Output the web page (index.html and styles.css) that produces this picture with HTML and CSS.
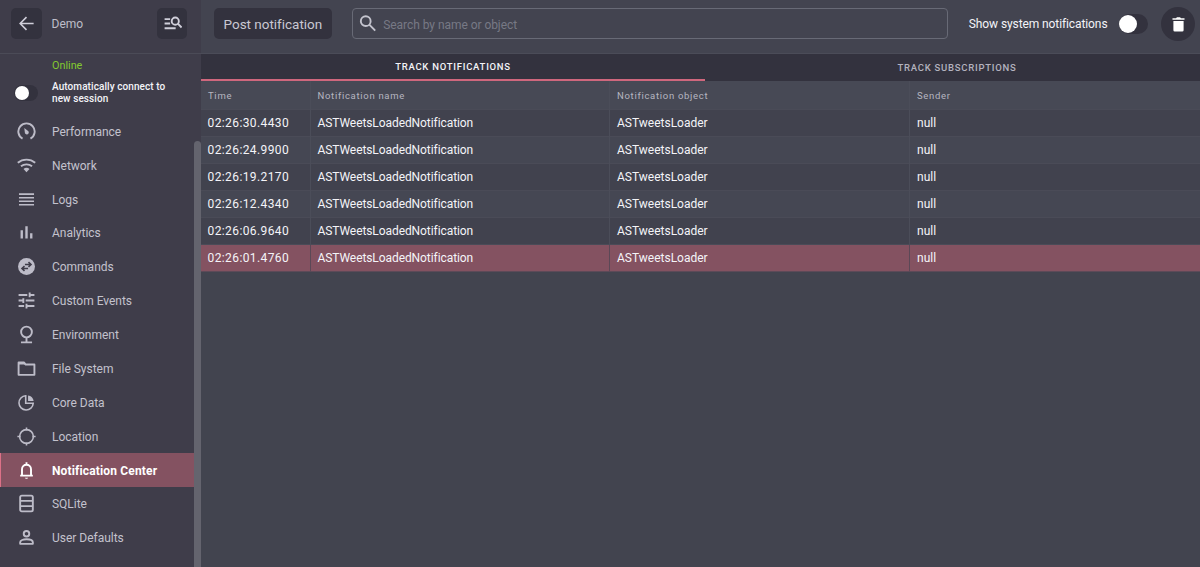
FILE: index.html
```html
<!DOCTYPE html>
<html lang="en">
<head>
<meta charset="utf-8">
<title>Notification Center</title>
<link rel="stylesheet" href="styles.css">
</head>
<body>
<div class="app">
  <aside class="sidebar">
    <header class="side-head">
      <button class="icon-button" aria-label="Back"><svg viewBox="0 0 24 24" class="ico line"><path d="M21 12H4M12 4l-8 8 8 8"/></svg></button>
      <span class="app-name">Demo</span>
      <button class="icon-button" aria-label="Find"><svg viewBox="0 0 24 24" class="ico find"><path d="M2 6.500h7M2 12h7M2 18h14"/><circle cx="15.500" cy="9" r="4.500"/><path d="M18.700 12.200L23.500 17"/></svg></button>
    </header>
    <div class="side-body">
      <div class="side-scroll">
        <div class="online">Online</div>
        <div class="auto"><span class="switch small"><i></i></span><span class="auto-text">Automatically connect to<br>new session</span></div>
        <nav class="nav">
          <a class="item"><svg viewBox="0 0 24 24" class="ico thick"><path d="M7 21a10.300 10.300 0 1 1 10 0"/><path class="fill" d="M9.200 7.500l5.200 4.300c1.200 1.600.2 3.700-1.600 3.900-1.700.2-2.900-1-2.900-2.400z"/></svg><span>Performance</span></a>
          <a class="item"><svg viewBox="0 0 24 24" class="ico thick"><path d="M1 8.500c6.300-5.300 15.700-5.300 22 0M5 13c4-3.300 10-3.300 14 0"/><path class="fill" d="M8.200 16.300c2.200-1.800 5.400-1.800 7.600 0L12 20.500z"/></svg><span>Network</span></a>
          <a class="item"><svg viewBox="0 0 24 24" class="ico line"><path d="M2.500 5.200h19M2.500 9.700h19M2.500 14.200h19M2.500 18.700h19"/></svg><span>Logs</span></a>
          <a class="item"><svg viewBox="0 0 24 24" class="ico bars"><path d="M6 9v10.500M12 4v15.500M18 13v6.500"/></svg><span>Analytics</span></a>
          <a class="item"><svg viewBox="0 0 24 24" class="ico"><circle class="fill" cx="12" cy="12" r="10.700"/><path class="cut" d="M10 9.500h7M14.500 6.500l3.200 3-3.200 3M14 14.500H7M9.500 11.500l-3.200 3 3.200 3"/></svg><span>Commands</span></a>
          <a class="item"><svg viewBox="0 0 24 24" class="ico thick"><path d="M2 5h11M16 5h6M16 2v6M2 12h6M8 9v6M11 12h11M2 19h7M12 19h10M12 16v6"/></svg><span>Custom Events</span></a>
          <a class="item"><svg viewBox="0 0 24 24" class="ico thick"><circle cx="12" cy="8.800" r="6.800"/><path d="M12 15.600V22M5 22h14"/></svg><span>Environment</span></a>
          <a class="item"><svg viewBox="0 0 24 24" class="ico thick"><path stroke-linejoin="round" d="M2 4.500h7l2 2.500h11v13H2z"/><path class="fill" d="M2 4.500h7l2 2.500H2z"/></svg><span>File System</span></a>
          <a class="item"><svg viewBox="0 0 24 24" class="ico line"><path d="M11 3.500a9 9 0 1 0 9.500 9.500H11z"/><path class="fill" d="M14 3v7h7c-.4-3.900-3.100-6.600-7-7z"/></svg><span>Core Data</span></a>
          <a class="item"><svg viewBox="0 0 24 24" class="ico line"><circle cx="12" cy="12" r="8.700"/><path d="M12 .5v4M12 19.500v4M.5 12h4M19.500 12h4"/></svg><span>Location</span></a>
          <a class="item active"><svg viewBox="0 0 24 24" class="ico thick"><path d="M4 18.500h16M6.300 18v-7.500c0-7.700 11.400-7.700 11.400 0V18M12 1.500v3"/><path class="fill" d="M10 21h4c-.4 1.900-3.600 1.900-4 0z"/></svg><span>Notification Center</span></a>
          <a class="item"><svg viewBox="0 0 24 24" class="ico thick"><rect x="4" y="2" width="16" height="20" rx="2"/><path d="M4 8.700h16M4 15.300h16"/></svg><span>SQLite</span></a>
          <a class="item"><svg viewBox="0 0 24 24" class="ico thick"><circle cx="12" cy="7.200" r="3.500"/><path stroke-linejoin="round" d="M4 20v-2c0-5 16-5 16 0v2z"/></svg><span>User Defaults</span></a>
        </nav>
      </div>
      <div class="track"><div class="thumb"></div></div>
    </div>
  </aside>
  <main class="main">
    <header class="toolbar">
      <button class="post">Post notification</button>
      <div class="search"><svg viewBox="0 0 24 24" class="ico mag"><circle cx="8.500" cy="9" r="6.200"/><path d="M13 13.500l7.500 7.500"/></svg><span>Search by name or object</span></div>
      <span class="show">Show system notifications</span>
      <span class="switch"><i></i></span>
      <button class="trash" aria-label="Clear"><svg viewBox="0 0 24 24" class="ico"><path class="fill" d="M3.500 3h5l1.300-1.200h4.400L15.500 3h5v2.300h-17zM4.800 7h14.400v13a2 2 0 0 1-2 2H6.800a2 2 0 0 1-2-2z"/></svg></button>
    </header>
    <div class="tabs"><div class="tab current"><span>TRACK NOTIFICATIONS</span></div><div class="tab"><span>TRACK SUBSCRIPTIONS</span></div></div>
    <div class="table">
      <div class="row head"><div>Time</div><div>Notification name</div><div>Notification object</div><div>Sender</div></div>
      <div class="row"><div class="time">02:26:30.4430</div><div class="name">ASTWeetsLoadedNotification</div><div>ASTweetsLoader</div><div>null</div></div>
      <div class="row"><div class="time">02:26:24.9900</div><div class="name">ASTWeetsLoadedNotification</div><div>ASTweetsLoader</div><div>null</div></div>
      <div class="row"><div class="time">02:26:19.2170</div><div class="name">ASTWeetsLoadedNotification</div><div>ASTweetsLoader</div><div>null</div></div>
      <div class="row"><div class="time">02:26:12.4340</div><div class="name">ASTWeetsLoadedNotification</div><div>ASTweetsLoader</div><div>null</div></div>
      <div class="row"><div class="time">02:26:06.9640</div><div class="name">ASTWeetsLoadedNotification</div><div>ASTweetsLoader</div><div>null</div></div>
      <div class="row selected"><div class="time">02:26:01.4760</div><div class="name">ASTWeetsLoadedNotification</div><div>ASTweetsLoader</div><div>null</div></div>
    </div>
  </main>
</div>
</body>
</html>
```

FILE: styles.css
```css
* { box-sizing: border-box; }
body { margin: 0; background: #42444f; font: 12px/14px Roboto, "IBM Plex Sans", sans-serif; color: #f4f4f8; }
button { border: 0; padding: 0; background: #33323e; color: #c9c8d2; font: inherit; }
.app { display: flex; width: 1200px; height: 567px; overflow: hidden; }

.ico { width: 19px; height: 19px; flex: none; fill: none; color: #bdbcc8; stroke: currentColor; stroke-width: 0; display: block; }
.line { stroke-width: 2; }
.thick { stroke-width: 2.4; }
.bars { stroke-width: 3; }
.find { stroke-width: 2.4; }
.mag { stroke-width: 2.4; color: #c4c4ce; }
.fill { fill: currentColor; stroke: none; }
.cut { stroke: #3f3d4a; stroke-width: 2; }

.sidebar { width: 201px; flex: none; display: flex; flex-direction: column; background: #3f3d4a; }
.side-head { height: 54px; padding: 0 14px 6px 11px; display: flex; align-items: center; border-bottom: 1px solid #4b4b57; }
.icon-button { width: 30.500px; height: 31px; border-radius: 5px; display: flex; align-items: center; justify-content: center; }
.icon-button .ico { color: #d0cfda; }
.app-name { flex: 1; margin-left: 10px; font-size: 12px; color: #bebdc8; }
.icon-button .find { margin-left: 2px; }
.side-body { flex: 1; display: flex; min-height: 0; }
.side-scroll { width: 194px; }
.online { margin: 4.500px 0 0 52px; color: #82c92f; font-size: 10.800px; height: 14px; }
.auto { display: flex; height: 41.900px; padding: 8px 0 0 14px; }
.auto-text { margin-left: 14px; font-size: 10px; font-weight: 500; line-height: 12px; letter-spacing: .08px; white-space: nowrap; }
.switch { width: 29px; height: 20px; border-radius: 10px; background: #33323e; flex: none; }
.switch i { display: block; width: 18px; height: 18px; margin: 1px 0; border-radius: 50%; background: #fff; }
.switch.small { width: 24px; height: 16px; margin-top: 4px; }
.switch.small i { width: 14px; height: 14px; margin: 1px; }
.item { display: flex; align-items: center; height: 33.880px; padding-left: 17px; color: #c3c2cd; font-size: 12px; letter-spacing: -.02px; }
.item span { margin: 1px 0 0 16px; }
.item.active { background: #845261; border-left: 1px solid #dc7187; padding-left: 16px; color: #fff; font-weight: 700; letter-spacing: .15px; }
.active .ico { color: #fff; }
.track { width: 7px; padding-top: 87px; }
.thumb { height: 430px; border-radius: 4px 4px 0 0; background: #64646e; }

.main { flex: 1; min-width: 0; }
.toolbar { height: 54px; padding: 0 5px 6px 13px; display: flex; align-items: center; border-bottom: 1px solid #4b4c58; background: #434450; }
.post { width: 118px; height: 31px; border-radius: 5px; font-size: 13.500px; letter-spacing: -.02px; }
.search { width: 598px; height: 31px; margin-left: 20px; padding-left: 6px; display: flex; align-items: center; border: 1px solid #686a76; border-radius: 4px; color: #777985; }
.search span { margin: 2px 0 0 5.500px; letter-spacing: -.05px; }
.show { width: 139px; margin: 1px 0 0 20.500px; white-space: nowrap; letter-spacing: -.1px; }
.toolbar .switch { margin-left: 11.500px; }
.trash { width: 34px; height: 34px; margin-left: 13px; border-radius: 50%; display: flex; align-items: center; justify-content: center; flex: none; }
.trash .ico { width: 17px; height: 17px; margin: 1px 0 0 1px; color: #fff; }
.tabs { height: 27px; display: flex; overflow: hidden; background: #33323e; }
.tab { flex: 0 0 504px; padding-top: 7px; text-align: center; font-size: 9.500px; font-weight: 500; letter-spacing: .75px; line-height: 14px; color: #b4b3bf; }
.tab.current { padding-top: 6px; border-bottom: 2px solid #cf677d; color: #f4f4f8; }
.row { height: 27.130px; display: grid; grid-template-columns: 109.500px 299.500px 300px 1fr; line-height: 27px; border-bottom: 1px solid #4a4b57; background: #41424e; }
.row:nth-child(odd) { background: #454753; }
.row > div { padding-left: 7px; border-right: 1px solid #4b4d59; }
.row > div:last-child { border-right: 0; }
.row.head { height: 28.500px; font-size: 9.500px; letter-spacing: .7px; line-height: 29px; color: #b6b6c0; background: #474955; }
.row.selected { background: #845261; border-color: #5d4a58; }
.row.selected > div { border-right-color: #5b4856; }
.row > .time { padding-left: 6.500px; letter-spacing: .4px; }
.name { letter-spacing: -.08px; }
```
